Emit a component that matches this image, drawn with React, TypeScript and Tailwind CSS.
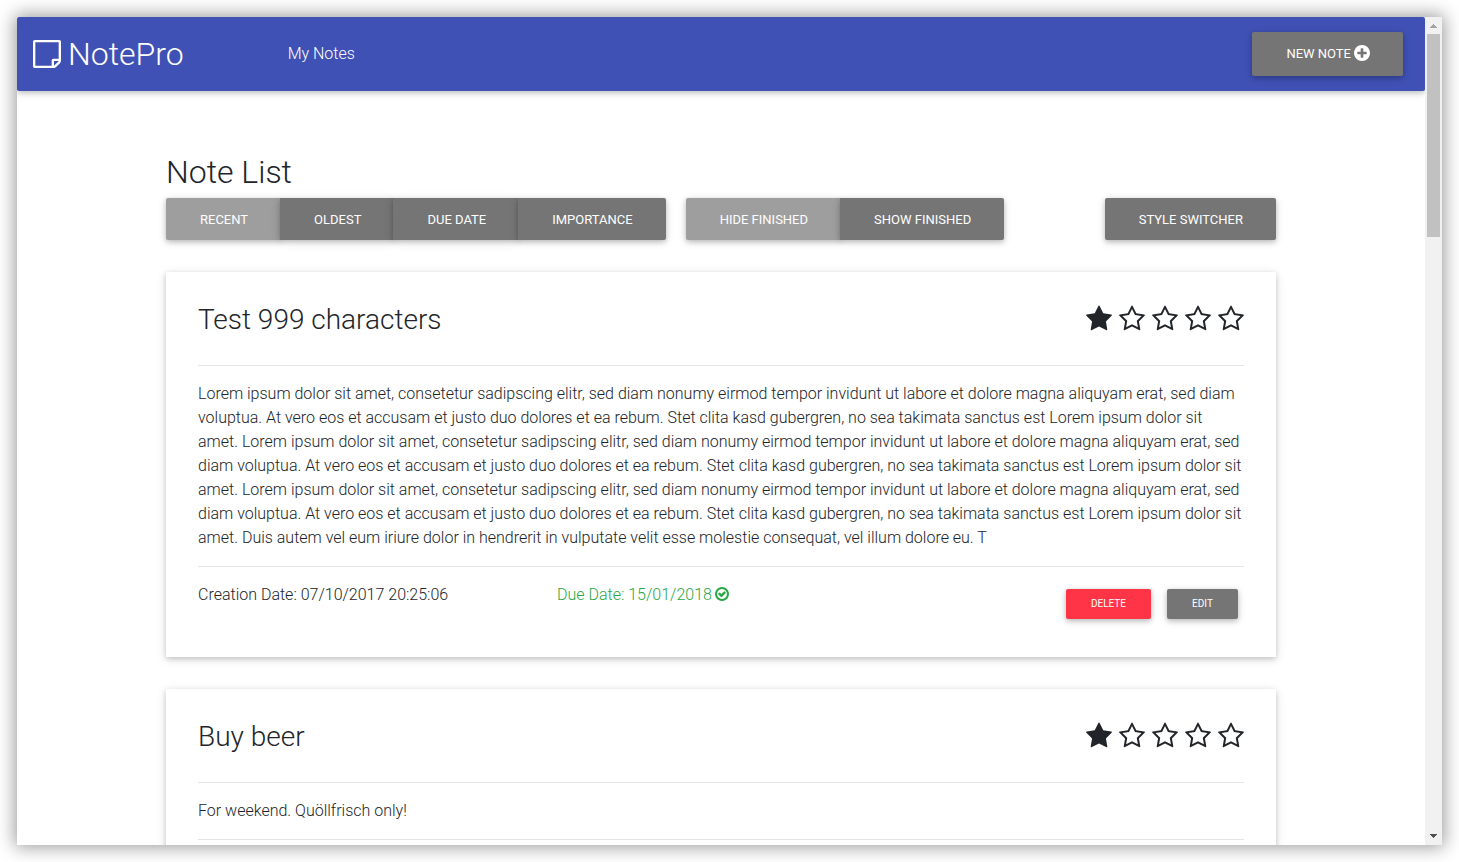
import type { ReactNode } from 'react';

const paths = {
  star: 'M1728 647q0 22-26 48l-363 354 86 500q1 7 1 20 0 21-10.5 35.5t-30.5 14.5q-19 0-40-12l-449-236-449 236q-22 12-40 12-21 0-31.5-14.5t-10.5-35.5q0-6 2-20l86-500-364-354q-25-27-25-48 0-37 56-46l502-73 225-455q19-41 49-41t49 41l225 455 502 73q56 9 56 46z',
  starOutline:
    'M1201 1004l306-297-422-62-189-382-189 382-422 62 306 297-73 421 378-199 377 199zm527-357q0 22-26 48l-363 354 86 500q1 7 1 20 0 50-41 50-19 0-40-12l-449-236-449 236q-22 12-40 12-21 0-31.5-14.5t-10.5-35.5q0-6 2-20l86-500-364-354q-25-27-25-48 0-37 56-46l502-73 225-455q19-41 49-41t49 41l225 455 502 73q56 9 56 46z',
  plusCircle:
    'M1344 960v-128q0-26-19-45t-45-19h-256v-256q0-26-19-45t-45-19h-128q-26 0-45 19t-19 45v256h-256q-26 0-45 19t-19 45v128q0 26 19 45t45 19h256v256q0 26 19 45t45 19h128q26 0 45-19t19-45v-256h256q26 0 45-19t19-45zm320-64q0 209-103 385.5t-279.5 279.5-385.5 103-385.5-103-279.5-279.5-103-385.5 103-385.5 279.5-279.5 385.5-103 385.5 103 279.5 279.5 103 385.5z',
  checkCircle:
    'M1299 813l-422 422q-19 19-45 19t-45-19l-294-294q-19-19-19-45t19-45l102-102q19-19 45-19t45 19l147 147 275-275q19-19 45-19t45 19l102 102q19 19 19 45t-19 45zm141 83q0-148-73-273t-198-198-273-73-273 73-198 198-73 273 73 273 198 198 273 73 273-73 198-198 73-273zm224 0q0 209-103 385.5t-279.5 279.5-385.5 103-385.5-103-279.5-279.5-103-385.5 103-385.5 279.5-279.5 385.5-103 385.5 103 279.5 279.5 103 385.5z',
  note: 'M1528 1280h-248v248q29-10 41-22l185-185q12-12 22-41zm-280-128h288v-896h-1280v1280h896v-288q0-40 28-68t68-28zm416-928v1024q0 40-20 88t-48 76l-184 184q-28 28-76 48t-88 20h-1024q-40 0-68-28t-28-68v-1344q0-40 28-68t68-28h1344q40 0 68 28t28 68z',
};

function Icon({
  name,
  className,
  viewBox = '128 128 1536 1536',
}: {
  name: keyof typeof paths;
  className: string;
  viewBox?: string;
}) {
  return (
    <svg viewBox={viewBox} className={className} fill="currentColor" aria-hidden="true">
      <path d={paths[name]} />
    </svg>
  );
}

const raised = 'shadow-[0_2px_5px_0_rgba(0,0,0,0.16),0_2px_10px_0_rgba(0,0,0,0.12)]';
const buttonShadow = 'shadow-[0_2px_5px_0_rgba(0,0,0,0.2),0_2px_10px_0_rgba(0,0,0,0.12)]';

function Button({ children, className = '' }: { children: ReactNode; className?: string }) {
  return (
    <button
      type="button"
      className={`${buttonShadow} cursor-pointer pr-[33px] pl-[34px] text-[13px] leading-4 font-normal whitespace-nowrap text-white uppercase ${className}`}
    >
      {children}
    </button>
  );
}

function ButtonGroup({ label, options }: { label: string; options: string[] }) {
  return (
    <div role="group" aria-label={label} className="flex">
      {options.map((option, i) => (
        <Button
          key={option}
          className={`h-[42px] pt-px first:rounded-l-[2px] last:rounded-r-[2px] ${i === 0 ? 'bg-[#9e9e9e]' : '-ml-px bg-[#757575]'}`}
        >
          {option}
        </Button>
      ))}
    </div>
  );
}

interface Note {
  title: string;
  text: string;
  created?: string;
  due?: string;
  rating: number;
}

const lorem =
  'Lorem ipsum dolor sit amet, consetetur sadipscing elitr, sed diam nonumy eirmod tempor invidunt ut labore et dolore magna aliquyam erat, sed diam voluptua. At vero eos et accusam et justo duo dolores et ea rebum. Stet clita kasd gubergren, no sea takimata sanctus est Lorem ipsum dolor sit amet. ';

const notes: Note[] = [
  {
    title: 'Test 999 characters',
    text: `${lorem}${lorem}${lorem}Duis autem vel eum iriure dolor in hendrerit in vulputate velit esse molestie consequat, vel illum dolore eu. T`,
    created: '07/10/2017 20:25:06',
    due: '15/01/2018',
    rating: 1,
  },
  {
    title: 'Buy beer',
    text: 'For weekend. Quöllfrisch only!',
    rating: 1,
  },
];

function NoteCard({ note }: { note: Note }) {
  return (
    <article className={`${raised} bg-white p-8`}>
      <div className="flex items-start justify-between pb-[30px]">
        <h3 className="text-[28px] leading-[31px]">{note.title}</h3>
        <div role="img" aria-label={`Importance ${note.rating} of 5`} className="flex gap-[7px] pt-px">
          {[1, 2, 3, 4, 5].map((n) => (
            <Icon
              key={n}
              name={n <= note.rating ? 'star' : 'starOutline'}
              viewBox="64 0 1664 1792"
              className="h-7 w-[26px]"
            />
          ))}
        </div>
      </div>
      <p className="border-y border-black/10 py-4">{note.text}</p>
      {note.created && (
        <div className="flex pt-4">
          <p className="w-[359px] shrink-0">Creation Date: {note.created}</p>
          <p className="flex grow items-start gap-[3px] text-[#28a745]">
            Due Date: {note.due}
            <Icon name="checkCircle" className="mt-1 h-[14px] w-[14px]" />
          </p>
          <div className="flex gap-4 p-[6px]">
            <button
              type="button"
              className={`${buttonShadow} h-[30px] w-[85px] cursor-pointer rounded-[2px] bg-[#ff3547] text-[10px] font-normal text-white uppercase`}
            >
              Delete
            </button>
            <button
              type="button"
              className={`${buttonShadow} h-[30px] w-[71px] cursor-pointer rounded-[2px] bg-[#757575] text-[10px] font-normal text-white uppercase`}
            >
              Edit
            </button>
          </div>
        </div>
      )}
    </article>
  );
}

function Scrollbar() {
  return (
    <div aria-hidden="true" className="flex w-[17px] shrink-0 flex-col items-center bg-[#f1f1f1]">
      <svg viewBox="0 0 17 17" className="h-[17px] w-[17px] shrink-0" shapeRendering="crispEdges">
        <path d="M5 11h7l-3-4h-1z" fill="#a3a3a3" />
      </svg>
      <div className="h-1/4 max-h-[203px] w-[13px] bg-[#c1c1c1]" />
      <svg viewBox="0 0 17 17" className="mt-auto h-[17px] w-[17px] shrink-0" shapeRendering="crispEdges">
        <path d="M5 6h7l-3 4h-1z" fill="#505050" />
      </svg>
    </div>
  );
}

export default function App() {
  return (
    <div className="h-screen bg-white p-[17px] font-[Roboto,sans-serif] text-base leading-6 font-light text-[#212529]">
      <div className="flex h-full overflow-hidden bg-white shadow-[0_0_17px_2px_rgba(0,0,0,0.4)]">
        <div className="min-w-0 grow overflow-hidden">
          <header
            className={`${raised} flex h-[74px] items-center rounded-[2px] bg-[#3f51b5] pr-[22px] pl-4 text-white`}
          >
            <a href="#home" className="flex items-center gap-[7px] text-[32px] leading-[48px]">
              <Icon name="note" className="h-7 w-7" />
              NotePro
            </a>
            <nav className="ml-[104px]">
              <a href="#notes">My Notes</a>
            </nav>
            <Button className="ml-auto flex h-[44px] items-center gap-[3px] rounded-[2px] bg-[#757575]">
              New Note
              <Icon name="plusCircle" className="-mt-[2px] h-[16px] w-[16px]" />
            </Button>
          </header>
          <main className="mx-auto max-w-[1140px] px-[15px] pt-16">
            <h2 className="mb-2 text-[32px] leading-[35px]">Note List</h2>
            <div className="flex gap-5">
              <ButtonGroup label="Sort order" options={['Recent', 'Oldest', 'Due Date', 'Importance']} />
              <ButtonGroup label="Finished notes" options={['Hide Finished', 'Show Finished']} />
              <Button className="ml-auto h-[42px] rounded-[2px] bg-[#757575] pt-px">Style Switcher</Button>
            </div>
            <div className="flex flex-col gap-8 pt-8">
              {notes.map((note) => (
                <NoteCard key={note.title} note={note} />
              ))}
            </div>
          </main>
        </div>
        <Scrollbar />
      </div>
    </div>
  );
}
